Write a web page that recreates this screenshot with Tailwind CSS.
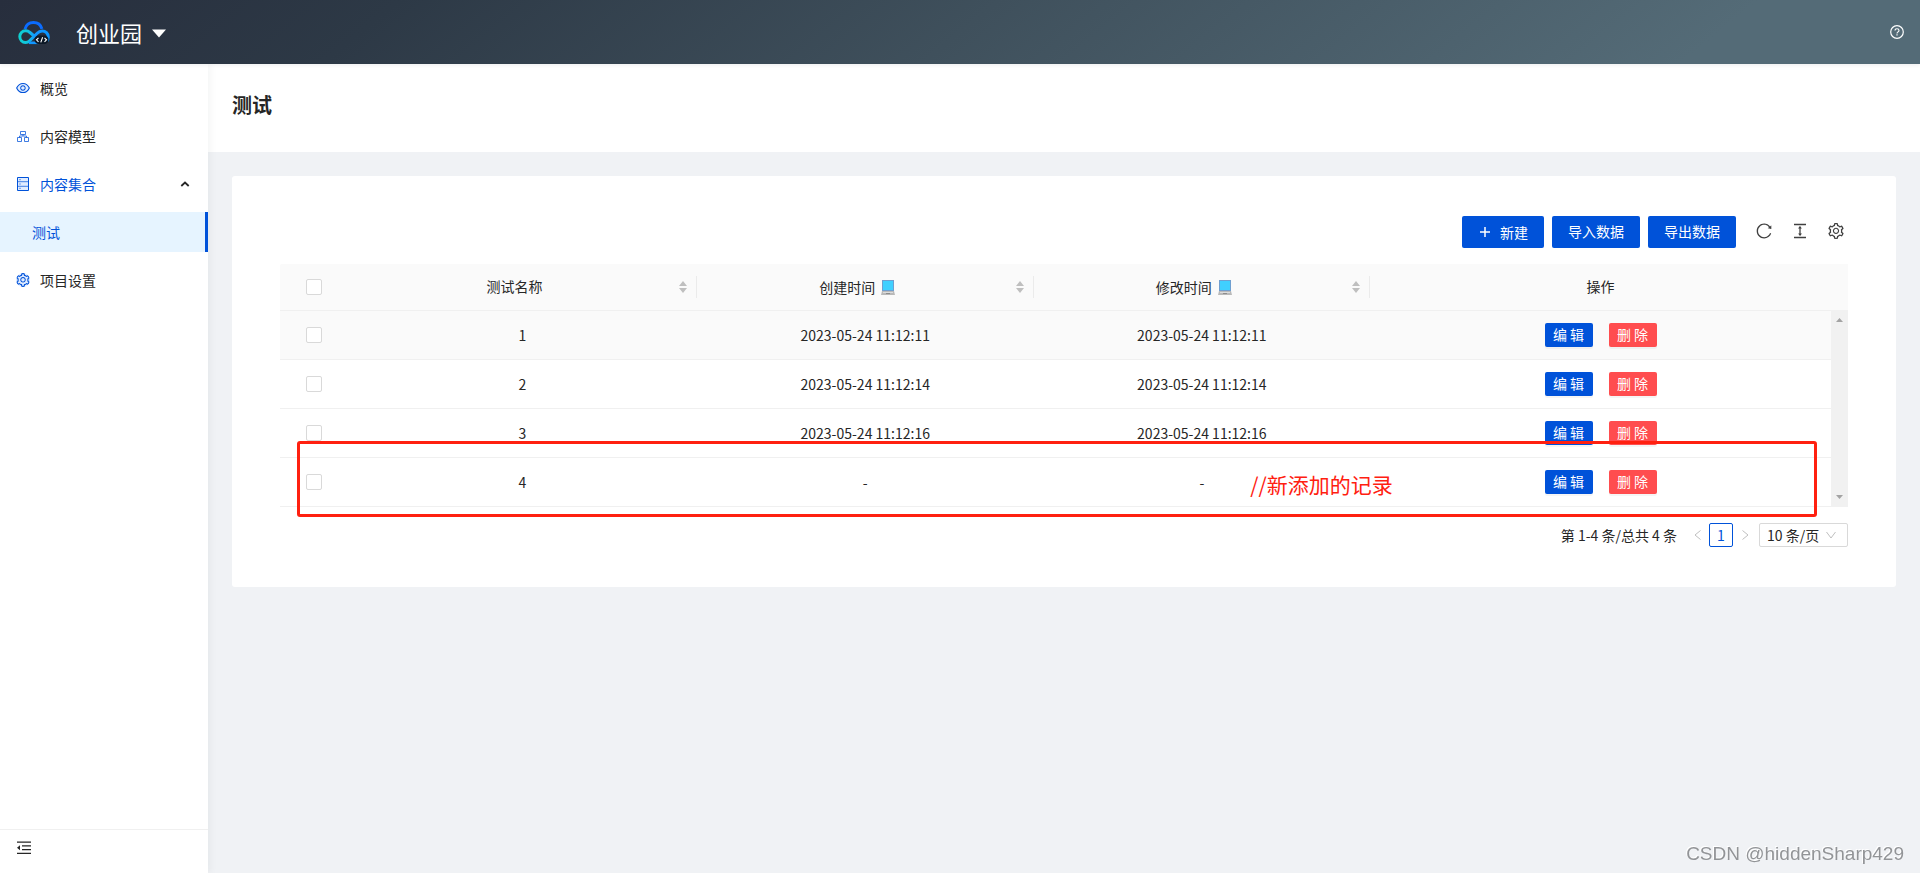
<!DOCTYPE html>
<html lang="zh-CN">
<head>
<meta charset="utf-8">
<meta name="viewport" content="width=device-width, initial-scale=1">
<title>测试 - 创业园</title>
<script src="https://cdn.jsdelivr.net/npm/@tailwindcss/browser@4"></script>
</head>
<body class="flex min-h-screen flex-col bg-[#f0f2f5] font-['Noto_Sans_CJK_SC',sans-serif] text-sm leading-[22px] text-[#262626]">

<!-- Shared icon shapes -->
<svg class="hidden" aria-hidden="true">
  <symbol id="gear" viewBox="64 64 896 896"><path d="M924.8 625.7l-65.5-56c3.1-19 4.7-38.4 4.7-57.8s-1.6-38.8-4.7-57.8l65.5-56a32.03 32.03 0 0 0 9.3-35.2l-.9-2.6a443.74 443.74 0 0 0-79.7-137.9l-1.8-2.1a32.12 32.12 0 0 0-35.1-9.5l-81.3 28.9c-30-24.6-63.5-44-99.7-57.6l-15.7-85a32.05 32.05 0 0 0-25.8-25.7l-2.7-.5c-52.1-9.4-106.9-9.4-159 0l-2.7.5a32.05 32.05 0 0 0-25.8 25.7l-15.8 85.4a351.86 351.86 0 0 0-99 57.4l-81.9-29.1a32 32 0 0 0-35.1 9.5l-1.8 2.1a446.02 446.02 0 0 0-79.7 137.9l-.9 2.6c-4.5 12.5-.8 26.5 9.3 35.2l66.3 56.6c-3.1 18.8-4.6 38-4.6 57.1 0 19.2 1.5 38.4 4.6 57.1L99 625.5a32.03 32.03 0 0 0-9.3 35.2l.9 2.6c18.1 50.4 44.9 96.9 79.7 137.9l1.8 2.1a32.12 32.12 0 0 0 35.1 9.5l81.9-29.1c29.8 24.5 63.1 43.9 99 57.4l15.8 85.4a32.05 32.05 0 0 0 25.8 25.7l2.7.5a449.4 449.4 0 0 0 159 0l2.7-.5a32.05 32.05 0 0 0 25.8-25.7l15.7-85a350 350 0 0 0 99.7-57.6l81.3 28.9a32 32 0 0 0 35.1-9.5l1.8-2.1c34.8-41.1 61.6-87.5 79.7-137.9l.9-2.6c4.5-12.3.8-26.3-9.3-35zM788.3 465.9c2.5 15.1 3.8 30.6 3.8 46.1s-1.3 31-3.8 46.1l-6.6 40.1 74.7 63.9a370.03 370.03 0 0 1-42.6 73.6L721 702.8l-31.4 25.8c-23.9 19.6-50.5 35-79.3 45.8l-38.1 14.3-17.9 97a377.5 377.5 0 0 1-85 0l-17.9-97.2-37.8-14.5c-28.5-10.8-55-26.2-78.7-45.7l-31.4-25.9-93.4 33.2c-17-22.9-31.2-47.6-42.6-73.6l75.5-64.5-6.5-40c-2.4-14.9-3.7-30.3-3.7-45.5 0-15.3 1.2-30.6 3.7-45.5l6.5-40-75.5-64.5c11.3-26.1 25.6-50.7 42.6-73.6l93.4 33.2 31.4-25.9c23.7-19.5 50.2-34.9 78.7-45.7l37.9-14.3 17.9-97.2c28.1-3.2 56.8-3.2 85 0l17.9 97 38.1 14.3c28.7 10.8 55.4 26.2 79.3 45.8l31.4 25.8 92.8-32.9c17 22.9 31.2 47.6 42.6 73.6L781.8 426l6.5 39.9zM512 326c-97.2 0-176 78.8-176 176s78.8 176 176 176 176-78.8 176-176-78.8-176-176-176zm79.2 255.2A111.6 111.6 0 0 1 512 614c-29.9 0-58-11.7-79.2-32.8A111.6 111.6 0 0 1 400 502c0-29.9 11.7-58 32.8-79.2C454 401.6 482.1 390 512 390c29.9 0 58 11.6 79.2 32.8A111.6 111.6 0 0 1 624 502c0 29.9-11.7 58-32.8 79.2z"/></symbol>
  <symbol id="sorter" viewBox="0 0 12 14"><path d="M6 1l4 5H2zM6 13l4-5H2z" fill="#bfbfbf"/></symbol>
  <symbol id="laptop" viewBox="0 0 14 16"><path d="M1 1h12v11H1z" fill="#6f9fd0"/><path d="M2 2h10v9H2z" fill="#40d0ff"/><path d="M1 12h12l1 4H0z" fill="#b9b9b9"/><path d="M2 13h10v1H2z" fill="#dcdcdc"/><path d="M5 14h4v1H5z" fill="#8c8c8c"/></symbol>
</svg>

<header class="z-20 flex h-16 shrink-0 items-center bg-[linear-gradient(141deg,#272e3d_0%,#2d3946_20%,#3f505c_50%,#546b77_88%)] pr-4 pl-[18px] text-white shadow-[0_1px_4px_rgba(0,21,41,0.08)]">
  <svg class="mt-0.5 h-6 w-8" viewBox="0 0 32 24" fill="none" aria-hidden="true">
    <path d="M7 8.200C8 4.300 11.300 1.600 15.500 1.600c4 0 7.300 2.500 8.400 6.300" stroke="#0b6cff" stroke-width="3"/>
    <path d="M15.500 14.500l-3.500-3C10.600 10.300 9.200 9.800 7.500 9.800 4.300 9.800 1.800 12.300 1.800 15.600s2.500 5.900 5.700 5.900c1.700 0 3-.7 4.300-1.900l7.400-7.300c1.300-1.400 2.900-2.400 5-2.400 3.300 0 6.100 2.700 6.100 6 0 2-.5 3-1.300 4" stroke="url(#cloud)" stroke-width="3"/>
    <path d="M11 21.800h10" stroke="#1296ff" stroke-width="2.600"/>
    <rect x="16.500" y="14.500" width="14" height="8.500" rx="4.200" fill="#0c1826"/>
    <path d="M20.500 16.800l-2 2 2 2M24.600 16.200l-1.800 5.200M26.500 16.800l2 2-2 2" stroke="#fff" stroke-width="1.100"/>
    <defs><linearGradient id="cloud" x1="1" y1="0" x2="30" y2="0" gradientUnits="userSpaceOnUse"><stop stop-color="#0fd0d0"/><stop offset=".3" stop-color="#10c4e0"/><stop offset=".55" stop-color="#1296ff"/><stop offset="1" stop-color="#0a94ff"/></linearGradient></defs>
  </svg>
  <button type="button" class="ml-[26px] flex items-center gap-2.5 text-[22px] leading-8">创业园
    <svg class="mt-0.5 h-[9px] w-3.5" viewBox="0 0 14 9" aria-hidden="true"><path d="M0 0.500h14L7 8.500z" fill="#fff"/></svg>
  </button>
  <a href="#help" aria-label="帮助" class="ml-auto">
    <svg class="size-3.5" viewBox="0 0 14 14" fill="none" stroke="#fff" aria-hidden="true"><circle cx="7" cy="7" r="6.300" stroke-width="1.200"/><path d="M5 5.600C5 4.400 5.900 3.700 7 3.700s2 .7 2 1.800c0 1.300-2 1.400-2 2.900" stroke-width="1.100"/><path d="M7 9.300v1.200" stroke-width="1.200"/></svg>
  </a>
</header>

<div class="flex flex-1">
  <aside class="z-10 flex w-52 shrink-0 flex-col bg-white shadow-[2px_0_8px_rgba(29,35,41,0.05)]">
    <nav class="flex flex-col gap-2 pt-1">
      <a href="#overview" class="flex h-10 items-center gap-2.5 pb-px pl-4">
        <svg class="size-3.5" viewBox="64 64 896 896" fill="#0052d9" aria-hidden="true"><path d="M150 512C232 340 350 258 512 258s280 82 363 254C792 684 674 766 512 766S232 684 150 512z" fill="#e0ecff"/><path d="M942.200 486.200C847.400 286.500 704.100 186 512 186c-192.200 0-335.400 100.500-430.200 300.300a60.300 60.300 0 0 0 0 51.500C176.600 737.500 319.900 838 512 838c192.200 0 335.400-100.500 430.200-300.300 7.700-16.200 7.700-35 0-51.500zM512 766c-161.300 0-279.400-81.800-362.700-254C232.600 339.800 350.700 258 512 258c161.300 0 279.400 81.800 362.700 254C791.500 684.200 674.400 766 512 766zm-4-430c-97.200 0-176 78.800-176 176s78.800 176 176 176 176-78.800 176-176-78.800-176-176-176zm0 288c-61.900 0-112-50.100-112-112s50.100-112 112-112 112 50.100 112 112-50.100 112-112 112z"/></svg>
        概览</a>
      <a href="#models" class="flex h-10 items-center gap-2.5 pb-px pl-4">
        <svg class="size-3.5" viewBox="0 0 14 14" fill="none" stroke="#0052d9" stroke-opacity=".75" aria-hidden="true"><path d="M4.500 2.500h5v3h-5zM1.500 8.500h4v4h-4zM8.500 8.500h4v4h-4zM7 5.500V7M3.500 8.500V7h7v1.500"/></svg>
        内容模型</a>
      <a href="#collections" class="flex h-10 items-center gap-2.5 pr-[18px] pb-px pl-4 text-[#0052d9]">
        <svg class="size-3.5" viewBox="0 0 14 14" fill="none" aria-hidden="true"><path d="M1.500.5h11v13h-11z" fill="#e0ecff" stroke="#0052d9"/><path d="M2 4.700h10M2 9.300h10" stroke="#0052d9" stroke-opacity=".7"/><path d="M3.500 2.700h1M3.500 7h1M3.500 11.300h1" stroke="#0052d9"/></svg>
        内容集合
        <svg class="ml-auto h-1.5 w-2.5" viewBox="0 0 10 6" fill="none" aria-hidden="true"><path d="M1.300 5L5 1.500 8.700 5" stroke="#262626" stroke-width="1.800"/></svg></a>
      <a href="#test" aria-current="page" class="flex h-10 items-center border-r-3 border-[#0052d9] bg-[#e6f4ff] pb-px pl-8 text-[#0052d9]">测试</a>
      <a href="#settings" class="flex h-10 items-center gap-2.5 pb-px pl-4">
        <svg class="size-3.5 rounded-full bg-[#e0ecff]" fill="#0052d9" aria-hidden="true"><use href="#gear"/></svg>
        项目设置</a>
    </nav>
    <div class="mt-auto flex h-11 items-start border-t border-[#f0f0f0] pt-2.5 pl-4">
      <button type="button" aria-label="收起菜单">
        <svg class="size-4" viewBox="0 0 16 16" aria-hidden="true"><path d="M1 1.500h14v1.300H1zM6 5.200h9v1.300H6zM6 9h9v1.300H6zM1 12.800h14v1.300H1zM4 5.300v5L1 7.800z" fill="#262626"/></svg>
      </button>
    </div>
  </aside>

  <div class="flex min-w-0 flex-1 flex-col">
    <div class="flex h-[88px] shrink-0 items-center bg-white px-6 pb-1.5">
      <h1 class="text-xl leading-8 font-bold">测试</h1>
    </div>

    <main class="m-6 rounded-[3px] bg-white px-12 pt-10 pb-10">
      <div class="flex items-center justify-end gap-2">
        <button type="button" class="flex h-8 items-center gap-2 rounded-[2px] bg-[#0052d9] px-4 pb-px text-white">
          <svg class="size-3.5" viewBox="0 0 14 14" aria-hidden="true"><path d="M7 2v10M2 7h10" stroke="#fff" stroke-width="1.500"/></svg>新建</button>
        <button type="button" class="h-8 rounded-[2px] bg-[#0052d9] px-4 pb-0.5 text-white">导入数据</button>
        <button type="button" class="h-8 rounded-[2px] bg-[#0052d9] px-4 pb-0.5 text-white">导出数据</button>
        <div class="mr-1 ml-3 flex items-center gap-5 pb-0.5">
          <button type="button" aria-label="刷新"><svg class="size-4" viewBox="64 64 896 896" fill="#404040" aria-hidden="true"><path d="M909.100 209.300l-56.400 44.100C775.800 155.100 656.200 92 521.900 92 290 92 102.300 279.500 102 511.500 101.700 743.700 289.800 932 521.900 932c181.300 0 335.800-115 394.600-276.100 1.500-4.200-.7-8.900-4.900-10.300l-56.700-19.500a8 8 0 0 0-10.100 4.800c-1.800 5-3.800 10-5.900 14.900-17.300 41-42.100 77.800-73.700 109.400A344.770 344.770 0 0 1 655.900 829c-42.300 17.900-87.400 27-133.800 27-46.500 0-91.500-9.100-133.800-27A341.500 341.500 0 0 1 279 755.200a342.160 342.160 0 0 1-73.700-109.400c-17.900-42.400-27-87.400-27-133.900s9.100-91.500 27-133.900c17.300-41 42.100-77.800 73.700-109.400 31.600-31.600 68.400-56.400 109.300-73.800 42.300-17.900 87.400-27 133.800-27 46.500 0 91.500 9.100 133.800 27a341.500 341.500 0 0 1 109.300 73.800c9.900 9.900 19.200 20.400 27.800 31.400l-60.200 47a8 8 0 0 0 3 14.100l175.600 43c5 1.200 9.900-2.600 9.900-7.700l.8-180.900c-.1-6.600-7.800-10.300-13-6.200z"/></svg></button>
          <button type="button" aria-label="密度"><svg class="size-4" viewBox="64 64 896 896" fill="#404040" aria-hidden="true"><path d="M840 836H184c-4.400 0-8 3.600-8 8v60c0 4.400 3.600 8 8 8h656c4.400 0 8-3.600 8-8v-60c0-4.400-3.600-8-8-8zm0-724H184c-4.400 0-8 3.600-8 8v60c0 4.400 3.600 8 8 8h656c4.400 0 8-3.600 8-8v-60c0-4.400-3.600-8-8-8zM610.800 378c6 0 9.400-7 5.700-11.700L515.700 238.700a7.140 7.140 0 0 0-11.300 0L403.600 366.300a7.230 7.230 0 0 0 5.700 11.700H476v268h-62.800c-6 0-9.400 7-5.700 11.700l100.800 127.500c2.900 3.700 8.500 3.700 11.300 0l100.800-127.500c3.700-4.700.4-11.700-5.700-11.700H548V378h62.800z"/></svg></button>
          <button type="button" aria-label="列设置"><svg class="size-4" fill="#404040" aria-hidden="true"><use href="#gear"/></svg></button>
        </div>
      </div>

      <div class="relative mt-4 flex">
        <table class="min-w-0 flex-1 table-fixed border-separate border-spacing-0 text-center">
          <colgroup><col class="w-[68px]"><col class="w-[22.5%]"><col class="w-[21.7%]"><col class="w-[21.7%]"><col></colgroup>
          <thead>
            <tr class="h-[47px] bg-[#fafafa] *:border-b *:border-[#f0f0f0] *:p-0 *:font-normal">
              <th class="rounded-tl-[2px]"><input type="checkbox" aria-label="全选" class="mx-auto block size-4 appearance-none rounded-[2px] border border-[#d9d9d9] bg-white"></th>
              <th scope="col"><div class="flex items-center pl-2"><span class="flex-1 pb-0.5">测试名称</span><button type="button" aria-label="按测试名称排序" class="ml-1"><svg class="h-3.5 w-3"><use href="#sorter"/></svg></button><span class="ml-[7px] h-[22px] w-px bg-[#ebebeb]"></span></div></th>
              <th scope="col"><div class="flex items-center pl-2"><span class="flex flex-1 items-center justify-center gap-1.5 pb-px">创建时间<svg class="h-4 w-3.5" aria-hidden="true"><use href="#laptop"/></svg></span><button type="button" aria-label="按创建时间排序" class="ml-1"><svg class="h-3.5 w-3"><use href="#sorter"/></svg></button><span class="ml-[7px] h-[22px] w-px bg-[#ebebeb]"></span></div></th>
              <th scope="col"><div class="flex items-center pl-2"><span class="flex flex-1 items-center justify-center gap-1.5 pb-px">修改时间<svg class="h-4 w-3.5" aria-hidden="true"><use href="#laptop"/></svg></span><button type="button" aria-label="按修改时间排序" class="ml-1"><svg class="h-3.5 w-3"><use href="#sorter"/></svg></button><span class="ml-[7px] h-[22px] w-px bg-[#ebebeb]"></span></div></th>
              <th scope="col"><div class="pb-0.5">操作</div></th>
            </tr>
          </thead>
          <tbody>
            <tr class="h-[49px] bg-[#fafafa] *:border-b *:border-[#f0f0f0] *:p-0">
              <td><input type="checkbox" aria-label="选择 1" class="mx-auto block size-4 appearance-none rounded-[2px] border border-[#d9d9d9] bg-white"></td>
              <td>1</td><td>2023-05-24 11:12:11</td><td>2023-05-24 11:12:11</td>
              <td><div class="flex justify-center gap-4"><button type="button" class="h-6 w-12 rounded-[2px] bg-[#0052d9] pb-0.5 text-white shadow-[0_2px_0_rgba(0,0,0,0.04)]">编 辑</button><button type="button" class="h-6 w-12 rounded-[2px] bg-[#ff4d4f] pb-0.5 text-white shadow-[0_2px_0_rgba(0,0,0,0.04)]">删 除</button></div></td>
            </tr>
            <tr class="h-[49px] *:border-b *:border-[#f0f0f0] *:p-0">
              <td><input type="checkbox" aria-label="选择 2" class="mx-auto block size-4 appearance-none rounded-[2px] border border-[#d9d9d9] bg-white"></td>
              <td>2</td><td>2023-05-24 11:12:14</td><td>2023-05-24 11:12:14</td>
              <td><div class="flex justify-center gap-4"><button type="button" class="h-6 w-12 rounded-[2px] bg-[#0052d9] pb-0.5 text-white shadow-[0_2px_0_rgba(0,0,0,0.04)]">编 辑</button><button type="button" class="h-6 w-12 rounded-[2px] bg-[#ff4d4f] pb-0.5 text-white shadow-[0_2px_0_rgba(0,0,0,0.04)]">删 除</button></div></td>
            </tr>
            <tr class="h-[49px] *:border-b *:border-[#f0f0f0] *:p-0">
              <td><input type="checkbox" aria-label="选择 3" class="mx-auto block size-4 appearance-none rounded-[2px] border border-[#d9d9d9] bg-white"></td>
              <td>3</td><td>2023-05-24 11:12:16</td><td>2023-05-24 11:12:16</td>
              <td><div class="flex justify-center gap-4"><button type="button" class="h-6 w-12 rounded-[2px] bg-[#0052d9] pb-0.5 text-white shadow-[0_2px_0_rgba(0,0,0,0.04)]">编 辑</button><button type="button" class="h-6 w-12 rounded-[2px] bg-[#ff4d4f] pb-0.5 text-white shadow-[0_2px_0_rgba(0,0,0,0.04)]">删 除</button></div></td>
            </tr>
            <tr class="h-[49px] *:border-b *:border-[#f0f0f0] *:p-0">
              <td><input type="checkbox" aria-label="选择 4" class="mx-auto block size-4 appearance-none rounded-[2px] border border-[#d9d9d9] bg-white"></td>
              <td>4</td><td>-</td><td>-</td>
              <td><div class="flex justify-center gap-4"><button type="button" class="h-6 w-12 rounded-[2px] bg-[#0052d9] pb-0.5 text-white shadow-[0_2px_0_rgba(0,0,0,0.04)]">编 辑</button><button type="button" class="h-6 w-12 rounded-[2px] bg-[#ff4d4f] pb-0.5 text-white shadow-[0_2px_0_rgba(0,0,0,0.04)]">删 除</button></div></td>
            </tr>
          </tbody>
        </table>
        <!-- Scrollbar track beside the table body -->
        <div class="flex w-[17px] shrink-0 flex-col" aria-hidden="true">
          <div class="h-[46px] bg-[#fafafa]"></div>
          <div class="flex flex-1 flex-col items-center justify-between bg-[#f1f1f1] py-2">
            <svg class="h-1 w-[7px]" viewBox="0 0 7 4"><path d="M0 4h7L3.500 0z" fill="#a3a3a3"/></svg>
            <svg class="h-1 w-[7px]" viewBox="0 0 7 4"><path d="M0 0h7L3.500 4z" fill="#a3a3a3"/></svg>
          </div>
        </div>
        <!-- Annotation around the newly added record -->
        <div class="pointer-events-none absolute top-[177px] right-[31px] left-[17px] flex h-[76px] items-center rounded-[3px] border-3 border-[#ff2010] pt-2.5 pl-[60.6%] text-[21px] leading-8 text-[#ff2010]">//新添加的记录</div>
      </div>

      <div class="mt-4 flex h-6 items-center justify-end">
        <span>第 1-4 条/总共 4 条</span>
        <nav aria-label="分页" class="ml-2 flex items-center">
          <button type="button" aria-label="上一页" disabled class="grid size-6 place-items-center"><svg class="h-2.5 w-[7px]" viewBox="0 0 7 10" fill="none"><path d="M6.500.5L1 5l5.500 4.500" stroke="#bfbfbf"/></svg></button>
          <button type="button" aria-current="page" class="size-6 rounded-[2px] border border-[#0052d9] leading-[22px] text-[#0052d9]">1</button>
          <button type="button" aria-label="下一页" disabled class="grid size-6 place-items-center"><svg class="h-2.5 w-[7px]" viewBox="0 0 7 10" fill="none"><path d="M.5.500L6 5 .5 9.500" stroke="#bfbfbf"/></svg></button>
        </nav>
        <div class="relative ml-0.5">
          <select aria-label="每页条数" class="block h-6 w-[89px] appearance-none rounded-[2px] border border-[#d9d9d9] bg-white pl-[7px] leading-[22px]"><option>10 条/页</option></select>
          <svg class="pointer-events-none absolute top-2 right-3 h-2 w-2.5" viewBox="0 0 10 8" fill="none" aria-hidden="true"><path d="M.5 1L5 7l4.500-6" stroke="#bfbfbf"/></svg>
        </div>
      </div>
    </main>
  </div>
</div>

<div class="pointer-events-none fixed right-4 bottom-[7px] z-30 font-['Liberation_Sans',sans-serif] text-[19px] leading-6 text-[#929497] [text-shadow:-1px_-1px_0_#ffffff]">CSDN @hiddenSharp429</div>
</body>
</html>
